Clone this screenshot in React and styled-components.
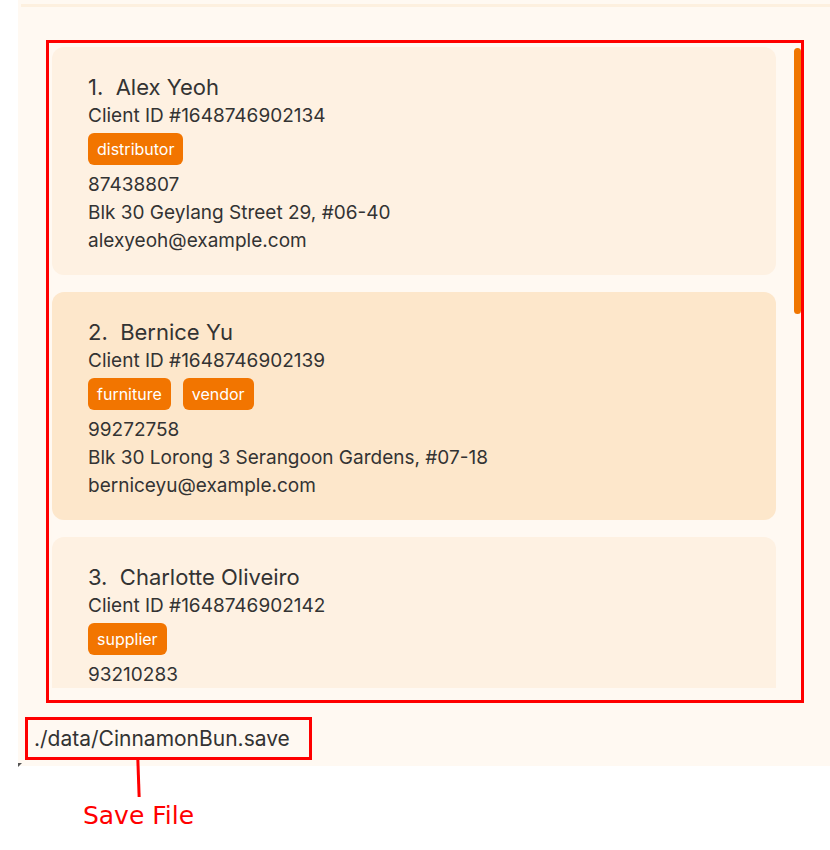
import React from "react";
import styled, { createGlobalStyle } from "styled-components";

const GlobalStyle = createGlobalStyle`
  body {
    margin: 0;
    background: #ffffff;
    font-family: Inter, "Noto Sans", sans-serif;
  }
`;

const Window = styled.div`
  position: relative;
  margin-left: 18px;
  width: 812px;
  height: 766px;
  padding-top: 4px;
  box-sizing: border-box;
  background: #fff9f2;

  &:after {
    content: "";
    position: absolute;
    left: 0;
    bottom: -1px;
    border-left: 4px solid #555;
    border-bottom: 4px solid transparent;
  }
`;

const TopLine = styled.div`
  margin-left: 3px;
  height: 3px;
  background: #fdf0df;
`;

const ListFrame = styled.div`
  margin: 33px 0 0 28px;
  width: 758px;
  height: 663px;
  border: 3px solid #ff0000;
  box-sizing: border-box;
  display: flex;
  align-items: flex-start;
`;

const List = styled.div`
  flex: 1;
  height: 641px;
  overflow: hidden;
  padding: 4px 18px 0 3px;
  display: flex;
  flex-direction: column;
  gap: 17px;
`;

const ScrollThumb = styled.div`
  margin-top: 5px;
  width: 7px;
  height: 266px;
  border-radius: 4px;
  background: #f07600;
`;

const Card = styled.div`
  flex-shrink: 0;
  height: 228px;
  box-sizing: border-box;
  padding: 25px 36px 0;
  border-radius: 12px;
  background: ${(p) => (p.alt ? "#fde7cb" : "#fef1e2")};
  color: #333333;
`;

const Name = styled.div`
  font-size: 22px;
  line-height: 30px;
  white-space: pre;
`;

const Line = styled.div`
  font-size: 19px;
  line-height: 28px;
`;

const Tags = styled.div`
  display: flex;
  gap: 12px;
  margin: 3px 0 6px;
`;

const Tag = styled.span`
  height: 32px;
  padding: 0 9px;
  display: flex;
  align-items: center;
  border-radius: 6px;
  background: #f27500;
  color: #ffffff;
  font-size: 16px;
`;

const StatusBox = styled.div`
  margin: 14px 0 0 7px;
  width: 287px;
  height: 43px;
  box-sizing: border-box;
  border: 3px solid #ff0000;
  padding-left: 6px;
  display: flex;
  align-items: center;
  font-size: 21px;
  color: #333333;
  white-space: nowrap;
`;

const Callout = styled.div`
  position: relative;
  margin: -6px 0 0 82px;
  width: 113px;
  display: flex;
  flex-direction: column;
  align-items: center;
`;

const CalloutLine = styled.div`
  width: 3px;
  height: 37px;
  background: #ff0000;
  transform: rotate(-2deg);
`;

const CalloutLabel = styled.div`
  margin-top: 4px;
  font-family: "DejaVu Sans", sans-serif;
  font-size: 25px;
  line-height: 30px;
  color: #ff0000;
  white-space: nowrap;
`;

const clients = [
  {
    name: "Alex Yeoh",
    id: "1648746902134",
    tags: ["distributor"],
    phone: "87438807",
    address: "Blk 30 Geylang Street 29, #06-40",
    email: "alexyeoh@example.com",
  },
  {
    name: "Bernice Yu",
    id: "1648746902139",
    tags: ["furniture", "vendor"],
    phone: "99272758",
    address: "Blk 30 Lorong 3 Serangoon Gardens, #07-18",
    email: "berniceyu@example.com",
  },
  {
    name: "Charlotte Oliveiro",
    id: "1648746902142",
    tags: ["supplier"],
    phone: "93210283",
    address: "Blk 11 Ang Mo Kio Street 74, #11-04",
    email: "charlotte@example.com",
  },
];

export default function App() {
  return (
    <>
      <GlobalStyle />
      <Window>
        <TopLine />
        <ListFrame>
          <List>
            {clients.map((c, i) => (
              <Card key={c.id} alt={i % 2 === 1}>
                <Name>{`${i + 1}.  ${c.name}`}</Name>
                <Line>Client ID #{c.id}</Line>
                <Tags>
                  {c.tags.map((t) => (
                    <Tag key={t}>{t}</Tag>
                  ))}
                </Tags>
                <Line>{c.phone}</Line>
                <Line>{c.address}</Line>
                <Line>{c.email}</Line>
              </Card>
            ))}
          </List>
          <ScrollThumb />
        </ListFrame>
        <StatusBox>./data/CinnamonBun.save</StatusBox>
      </Window>
      <Callout>
        <CalloutLine />
        <CalloutLabel>Save File</CalloutLabel>
      </Callout>
    </>
  );
}
